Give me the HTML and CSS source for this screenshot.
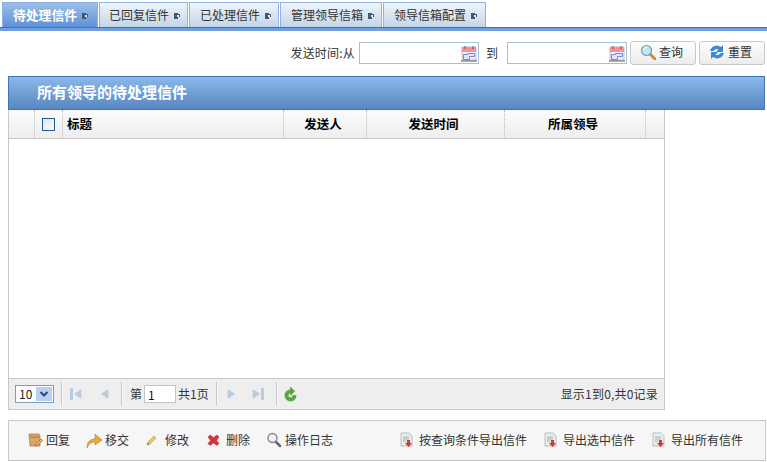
FILE: index.html
```html
<!DOCTYPE html>
<html lang="zh">
<head>
<meta charset="utf-8">
<title>领导信箱</title>
<link rel="stylesheet" href="styles.css">
</head>
<body>
<svg class="defs" width="0" height="0">
  <symbol id="pin" viewBox="0 0 6 6"><path d="M0 0h4v1h2v3h-2v2h-4z" fill="#46566e"/><rect x="3" y="2" width="2" height="2" fill="#dfe6f0"/></symbol>
  <symbol id="cal" viewBox="0 0 16 17"><rect x="1" y="2" width="14" height="13" fill="#f2f2f6" stroke="#999" stroke-width=".6"/><rect x="1" y="2" width="14" height="5" fill="#f29294"/><path d="M4 1v3M12 1v3" stroke="#8a4a4a" stroke-width="1"/><path d="M2.500 9.500h4v-1h7v3h-5v3h-6z" fill="#dfe4fa" stroke="#7286e6"/><path d="M0 16h16" stroke="#555"/></symbol>
  <symbol id="tri" viewBox="0 0 12 12"><path d="M10 0v12L1 6z"/></symbol>
  <symbol id="doc" viewBox="0 0 16 16"><path d="M2 1h8l3 3v10H2z" fill="#e8f0ee" stroke="#a8b4b4" stroke-width=".8"/><path d="M4 5h6M4 7h6M4 9h3" stroke="#9cb0b0"/><path d="M8 8h3v3h2l-3.500 4L6 11h2z" fill="#d4343c"/></symbol>
</svg>

<nav class="tabs">
  <a class="tab tab-active">待处理信件<svg class="pin"><use href="#pin"/></svg></a>
  <a class="tab tab-2">已回复信件<svg class="pin"><use href="#pin"/></svg></a>
  <a class="tab tab-3">已处理信件<svg class="pin"><use href="#pin"/></svg></a>
  <a class="tab tab-4">管理领导信箱<svg class="pin"><use href="#pin"/></svg></a>
  <a class="tab tab-5">领导信箱配置<svg class="pin"><use href="#pin"/></svg></a>
</nav>

<form class="search">
  <span class="search-label">发送时间:从</span>
  <span class="date"><svg class="cal"><use href="#cal"/></svg></span>
  <span class="search-to">到</span>
  <span class="date"><svg class="cal"><use href="#cal"/></svg></span>
  <button type="button" class="btn btn-first">
    <svg class="btn-icon" viewBox="0 0 16 16"><path d="M10 10l5 5" stroke="#c98a1e" stroke-width="2.600" stroke-linecap="round"/><circle cx="6.500" cy="6.500" r="5" fill="#bfe6f7" stroke="#7a9fb4" stroke-width="1.200"/><path d="M4 6a3 3 0 0 1 3-3" stroke="#fff" fill="none"/></svg>查询</button>
  <button type="button" class="btn">
    <svg class="btn-icon" viewBox="0 0 16 16"><path d="M1 7a7 7 0 0 1 11-4l2-2v7H7l2.500-2.500A3.500 3.500 0 0 0 4.500 7z" fill="#3a8adc"/><path d="M15 9a7 7 0 0 1-11 4l-2 2V8h7l-2.500 2.500A3.500 3.500 0 0 0 11.500 9z" fill="#3a8adc"/></svg>重置</button>
</form>

<section class="panel-head">所有领导的待处理信件</section>

<section class="grid">
  <div class="grid-head">
    <div class="col col-num"></div>
    <div class="col col-check"><span class="check"></span></div>
    <div class="col col-title">标题</div>
    <div class="col col-c">发送人</div>
    <div class="col col-c">发送时间</div>
    <div class="col col-c">所属领导</div>
    <div class="col col-end"></div>
  </div>
  <div class="grid-body"></div>
  <div class="pager">
    <span class="page-size">10<span class="page-arrow"><svg viewBox="0 0 10 10" width="10" height="10"><path d="M1.500 3l3.500 3.500L8.500 3" fill="none" stroke="#2c4a80" stroke-width="2"/></svg></span></span>
    <i class="sep"></i>
    <svg class="bar bar-l" viewBox="0 0 3 12"><rect width="3" height="12"/></svg>
    <svg class="nav nav-first"><use href="#tri"/></svg>
    <svg class="nav nav-prev"><use href="#tri"/></svg>
    <i class="sep sep-b"></i>
    <span class="page-text">第</span><span class="page-input">1</span><span class="page-text">共1页</span>
    <i class="sep sep-c"></i>
    <svg class="nav nav-next"><use href="#tri"/></svg>
    <svg class="nav nav-last"><use href="#tri"/></svg>
    <svg class="bar bar-r" viewBox="0 0 3 12"><rect width="3" height="12"/></svg>
    <i class="sep sep-d"></i>
    <svg class="reload" viewBox="0 0 16 16"><path d="M8 3a6 6 0 1 0 6 6h-3.500a2.500 2.500 0 1 1-2.500-2.500V9l4.500-4.500L8 0z" fill="#55a83c" stroke="#3d8a2a" stroke-width=".5"/></svg>
    <span class="page-info">显示1到0,共0记录</span>
  </div>
</section>

<section class="toolbar">
  <a class="tool tool-a"><svg class="tool-icon" viewBox="0 0 16 16"><path d="M2 2h10l1 2v10H3z" fill="#d8a468" stroke="#a87838" stroke-width=".7"/><path d="M3 5h9" stroke="#a87838"/><path d="M8 14l1-2 5-5 1.500 1.500-5 5z" fill="#e8c040" stroke="#c03030" stroke-width=".6"/></svg>回复</a>
  <a class="tool tool-b"><svg class="tool-icon" viewBox="0 0 16 16"><path d="M1 16c0-6 3-9 8-9V2l7 6-7 5V10c-4 0-6 2-8 6z" fill="#f0a830" stroke="#a88048" stroke-width=".6"/></svg>移交</a>
  <a class="tool tool-c"><svg class="tool-icon" viewBox="0 0 16 16"><path d="M2 13l1-3 6-6 2 2-6 6z" fill="#ecc552" stroke="#b08a30" stroke-width=".5"/><path d="M2 13l1-2 1 1z" fill="#444"/></svg>修改</a>
  <a class="tool tool-d"><svg class="tool-icon" viewBox="0 0 16 16"><path d="M3 3l3.500 2.500L10 3l2 2-2.500 3.500 2.500 3-2 2-3.500-2.500L3 13.500l-2-2 2.500-3L1 5z" fill="#d8343a" stroke="#a82a2a" stroke-width=".5"/></svg>删除</a>
  <a class="tool tool-e"><svg class="tool-icon" viewBox="0 0 16 16"><path d="M9 9l5 5" stroke="#666" stroke-width="2.500" stroke-linecap="round"/><circle cx="6.500" cy="6" r="4.500" fill="#eef2f4" stroke="#888" stroke-width="1.400"/></svg>操作日志</a>
  <span class="tool-space"></span>
  <a class="tool tool-x"><svg class="tool-icon"><use href="#doc"/></svg>按查询条件导出信件</a>
  <a class="tool tool-x"><svg class="tool-icon"><use href="#doc"/></svg>导出选中信件</a>
  <a class="tool tool-x"><svg class="tool-icon"><use href="#doc"/></svg>导出所有信件</a>
</section>
</body>
</html>
```
FILE: styles.css
```css
* { box-sizing: border-box; }
html, body { margin: 0; padding: 0; }
body {
  width: 767px;
  height: 462px;
  overflow: hidden;
  background: #fff;
  color: #333;
  font: 12px/16px "Noto Sans CJK SC", "Liberation Sans", sans-serif;
}
.defs { position: absolute; }

.tabs {
  display: flex;
  height: 31px;
  padding: 2px 0 0 2px;
  gap: 1px;
  border-bottom: 3px solid #6fa0e2;
  box-shadow: inset 0 -1px 0 #3f6db0;
}
.tab {
  display: flex;
  align-items: center;
  height: 25px;
  width: 89px;
  padding: 0 0 1px 10px;
  border: 1px solid #8fb3e2;
  border-bottom: 0;
  background: linear-gradient(#eff4fa, #c3d5e9);
  color: #333;
}
.tab-active {
  width: 96px;
  border-color: #8cb0e4;
  background: linear-gradient(#9cc0e8, #5f90d8);
  color: #fff;
  font-size: 12.800px;
  font-weight: 700;
}
.tab-2 { padding-left: 9px; }
.tab-3 { width: 90px; }
.tab-4 { width: 102px; }
.tab-5 { width: 103px; }
.pin { width: 6px; height: 6px; margin-left: 5px; margin-top: 2px; flex: none; }

.search {
  display: flex;
  align-items: center;
  height: 24px;
  margin: 10px 0 0;
  padding-right: 2px;
  justify-content: flex-end;
}
.search-label { margin-right: 4px; letter-spacing: .2px; }
.date {
  display: flex;
  align-items: center;
  justify-content: flex-end;
  width: 120px;
  height: 22px;
  border: 1px solid #a5c1da;
  background: #fff;
}
.cal { width: 16px; height: 17px; margin-right: 1px; }
.search-to { margin: 0 9px 0 7px; }
.btn {
  display: flex;
  align-items: center;
  height: 24px;
  width: 66px;
  margin: 0 0 0 3px;
  padding: 0 0 2px 9px;
  border: 1px solid #c8c8c8;
  border-radius: 3px;
  background: linear-gradient(#fefefe, #ececec);
  color: #333;
  font: inherit;
}
.btn-icon { width: 16px; height: 16px; margin-right: 3px; flex: none; }

.panel-head {
  width: 757px;
  height: 34px;
  margin: 11px 0 0 8px;
  padding-left: 28px;
  border: 1px solid #3f74b8;
  background: linear-gradient(#8ab8e6, #5888c4);
  color: #fff;
  font-size: 15px;
  font-weight: 700;
  line-height: 30px;
}

.grid {
  display: flex;
  flex-direction: column;
  width: 657px;
  height: 300px;
  margin-left: 8px;
  border: 1px solid #c8c8c8;
  border-top: 0;
}
.grid-head {
  display: grid;
  grid-template-columns: 26px 28px 221px 83px 138px 141px 1fr;
  height: 29px;
  flex: none;
  border-bottom: 1px solid #c8c8c8;
  background: linear-gradient(#fbfbfb, #eeeeee);
  color: #000;
  font-size: 12.500px;
  font-weight: 700;
}
.col {
  display: flex;
  align-items: center;
  border-right: 1px dotted #bbb;
}
.col-c { justify-content: center; padding-right: 4px; }
.col-title { padding-left: 4px; }
.col-check { justify-content: center; }
.col-end { border-right: 0; }
.check {
  width: 13px;
  height: 13px;
  border: 1px solid #1f5a92;
  background: linear-gradient(135deg, #e4e4e4, #fbfbfb);
}
.grid-body { flex: 1; background: #fff; }

.pager {
  display: flex;
  align-items: center;
  height: 31px;
  flex: none;
  padding: 0 6px;
  border-top: 1px solid #c8c8c8;
  background: #eeeeee;
}
.page-size {
  display: flex;
  align-items: center;
  justify-content: space-between;
  width: 39px;
  height: 18px;
  padding: 1px 1px 1px 3px;
  border: 1px solid #7f9db9;
  background: #fff;
  color: #222;
}
.page-arrow {
  display: flex;
  align-items: center;
  justify-content: center;
  width: 16px;
  height: 14px;
  background: #b9d0f2;
}
.sep {
  display: block;
  width: 1px;
  height: 24px;
  margin-left: 7px;
  background: #c8c8c8;
  box-shadow: 1px 0 0 #f8f8f8;
}
.sep-b { margin-left: 11px; }
.sep-c { margin-left: 7px; }
.sep-d { margin-left: 12px; }
.nav { width: 10px; height: 12px; fill: #b8cde0; flex: none; }
.bar { width: 3px; height: 12px; fill: #b8cde0; flex: none; }
.bar-l { margin-left: 8px; }
.nav-first { margin-left: 0; }
.nav-prev { margin-left: 17px; }
.nav-next { margin-left: 9px; transform: scaleX(-1); }
.nav-last { margin-left: 15px; transform: scaleX(-1); }
.page-text { color: #333; }
.sep-b + .page-text { margin-left: 8px; }
.page-input {
  width: 32px;
  height: 18px;
  margin: 0 2px;
  padding: 1px 0 0 3px;
  border: 1px solid #c4c4c4;
  background: #fff;
  color: #111;
}
.reload { width: 15px; height: 17px; margin-left: 6px; }
.page-info { margin-left: auto; letter-spacing: .2px; }

.toolbar {
  display: flex;
  align-items: center;
  width: 758px;
  height: 41px;
  margin: 10px 0 0 8px;
  padding: 0 22px 2px 18px;
  border: 1px solid #c8c8c8;
  background: #f6f6f6;
}
.tool { display: flex; align-items: center; color: #333; }
.tool-icon { width: 16px; height: 16px; margin-right: 3px; flex: none; }
.tool-b { margin-left: 16px; }
.tool-c { margin-left: 16px; }
.tool-c .tool-icon { margin-right: 4px; }
.tool-d { margin-left: 18px; }
.tool-e { margin-left: 16px; }
.tool-space { flex: 1; }
.tool-x { margin-left: 16px; }
.tool-x .tool-icon { margin-right: 4px; }
```
